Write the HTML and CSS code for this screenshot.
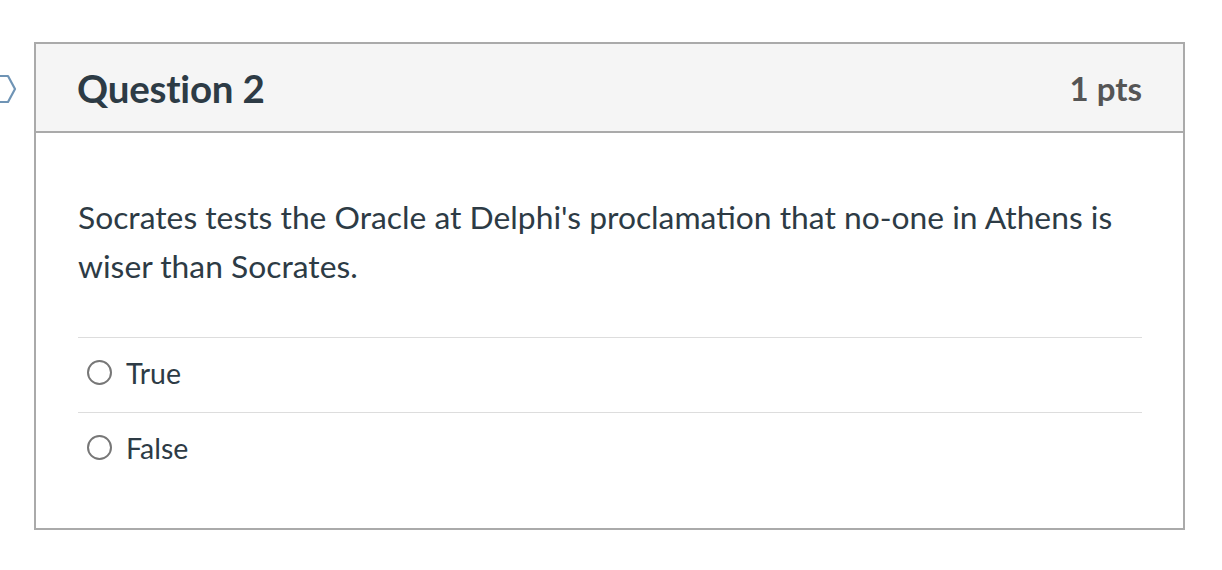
FILE: index.html
```html
<!DOCTYPE html>
<html>
<head>
<meta charset="utf-8">
<link rel="stylesheet" href="styles.css">
</head>
<body>
<div class="page">
  <svg class="flag" width="20" height="30" viewBox="0 0 20 30">
    <path d="M-4 2 H8 L15 15 L8 28 H-4" fill="none" stroke="#6f94b5" stroke-width="2.2" stroke-linejoin="round"/>
  </svg>
  <div class="card">
    <div class="card-header">
      <h2 class="title">Question 2</h2>
      <span class="pts">1 pts</span>
    </div>
    <div class="card-body">
      <p class="question">Socrates tests the Oracle at Delphi's proclamation that no-one in Athens is wiser than Socrates.</p>
      <div class="answers">
        <label class="answer"><span class="radio"></span><span class="answer-text">True</span></label>
        <label class="answer"><span class="radio"></span><span class="answer-text">False</span></label>
      </div>
    </div>
  </div>
</div>
</body>
</html>
```
FILE: styles.css
```css
html, body {
  margin: 0;
  padding: 0;
  background: #fff;
}
body {
  font-family: Lato, "Noto Sans", sans-serif;
  color: #2d3b45;
}
.page {
  position: relative;
  padding: 42px 0 0 34px;
}
.flag {
  position: absolute;
  left: 0;
  top: 74px;
}
.card {
  width: 1147px;
  height: 484px;
  border: 2px solid #aaaaaa;
  box-sizing: content-box;
  display: flex;
  flex-direction: column;
}
.card-header {
  height: 87px;
  background: #f5f5f5;
  border-bottom: 2px solid #aaaaaa;
  display: flex;
  align-items: center;
  justify-content: space-between;
  padding: 0 41px 0 41px;
}
.title {
  margin: 0;
  font-size: 38.5px;
  font-weight: 700;
  color: #2d3b45;
  letter-spacing: -0.2px;
}
.pts {
  font-size: 33px;
  font-weight: 700;
  color: #555555;
}
.card-body {
  padding: 60px 41px 0 42px;
}
.question {
  margin: 0;
  font-size: 31.8px;
  line-height: 49px;
}
.answers {
  margin-top: 46px;
}
.answer {
  display: flex;
  align-items: center;
  height: 75px;
  padding-bottom: 5px;
  border-top: 1px solid #dddddd;
  box-sizing: border-box;
}
.radio {
  width: 21px;
  height: 21px;
  border: 2px solid #777777;
  border-radius: 50%;
  margin-left: 9px;
  margin-right: 14px;
  flex: none;
}
.answer-text {
  font-size: 28.5px;
}
```
